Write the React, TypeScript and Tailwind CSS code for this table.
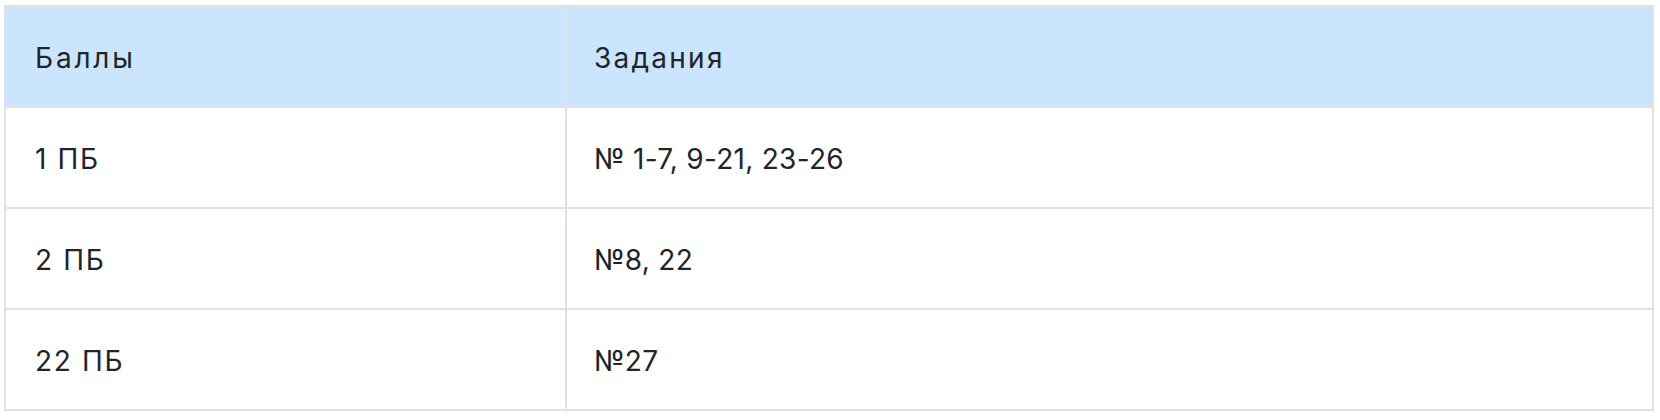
const rows = [
  { score: '1 ПБ', tasks: '№ 1-7, 9-21, 23-26' },
  { score: '2 ПБ', tasks: '№8, 22' },
  { score: '22 ПБ', tasks: '№27' },
];

export default function App() {
  return (
    <div
      className="w-[1660px] h-[420px] bg-white pl-[4px] pt-[5px]"
      style={{ fontFamily: 'Inter, "Noto Sans", sans-serif' }}
    >
      <table className="w-[1650px] border-collapse border-2 border-[#dee2e6] text-[28px] text-[#212529] table-fixed">
        <colgroup>
          <col className="w-[561px]" />
          <col />
        </colgroup>
        <thead>
          <tr className="bg-[#cce5ff] h-[101px]">
            <th className="border-2 border-[#dee2e6] pl-[29px] pt-[3px] text-left font-normal tracking-[0.1em]">
              Баллы
            </th>
            <th className="border-2 border-[#dee2e6] pl-[27px] pt-[3px] text-left font-normal tracking-[0.08em]">
              Задания
            </th>
          </tr>
        </thead>
        <tbody>
          {rows.map((row) => (
            <tr key={row.score} className="h-[101px]">
              <td className="border-2 border-[#dee2e6] pl-[29px] pt-[3px] tracking-[0.06em]">{row.score}</td>
              <td className="border-2 border-[#dee2e6] pl-[27px] pt-[3px] tracking-[0.01em]">{row.tasks}</td>
            </tr>
          ))}
        </tbody>
      </table>
    </div>
  );
}
